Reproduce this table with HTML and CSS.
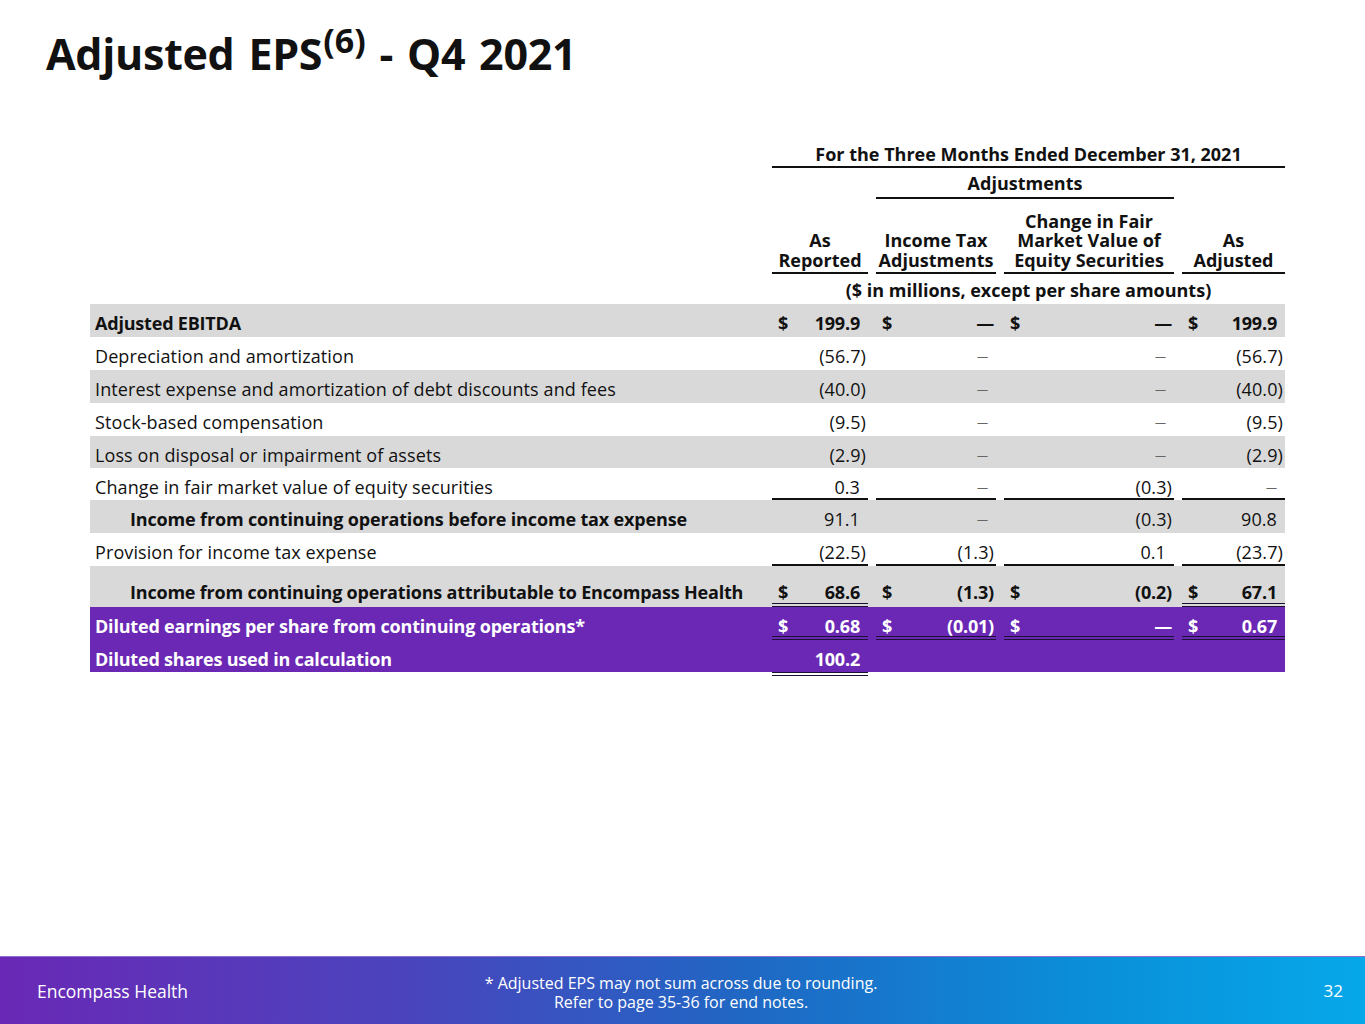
FILE: index.html
```html
<!DOCTYPE html>
<html lang="en">
<head>
<meta charset="utf-8">
<title>Adjusted EPS - Q4 2021</title>
<link rel="stylesheet" href="styles.css">
</head>
<body>
<div class="page">
  <main class="main">
    <h1 class="title">Adjusted EPS<sup>(6)</sup> - Q4 2021</h1>
    <div class="eps">
      <div class="row h1">
        <div class="th span-all ul">For the Three Months Ended December 31, 2021</div>
      </div>
      <div class="row h2">
        <div class="th span-adj ul">Adjustments</div>
      </div>
      <div class="row h3">
        <div class="th c1 ul"><div>As</div><div>Reported</div></div>
        <div class="th c2 ul"><div>Income Tax</div><div>Adjustments</div></div>
        <div class="th c3 ul"><div>Change in Fair</div><div>Market Value of</div><div>Equity Securities</div></div>
        <div class="th c4 ul"><div>As</div><div>Adjusted</div></div>
      </div>
      <div class="row h4">
        <div class="th span-all">($ in millions, except per share amounts)</div>
      </div>

      <div class="row gray bold">
        <div class="label">Adjusted EBITDA</div>
        <div class="v c1"><span>$</span><span class="p">199.9</span></div>
        <div class="v c2"><span>$</span><span class="bd">—</span></div>
        <div class="v c3"><span>$</span><span class="bd">—</span></div>
        <div class="v c4"><span>$</span><span class="p">199.9</span></div>
      </div>
      <div class="row">
        <div class="label">Depreciation and amortization</div>
        <div class="v c1"><span>(56.7)</span></div>
        <div class="v c2"><span class="d">—</span></div>
        <div class="v c3"><span class="d">—</span></div>
        <div class="v c4"><span>(56.7)</span></div>
      </div>
      <div class="row gray">
        <div class="label">Interest expense and amortization of debt discounts and fees</div>
        <div class="v c1"><span>(40.0)</span></div>
        <div class="v c2"><span class="d">—</span></div>
        <div class="v c3"><span class="d">—</span></div>
        <div class="v c4"><span>(40.0)</span></div>
      </div>
      <div class="row">
        <div class="label">Stock-based compensation</div>
        <div class="v c1"><span>(9.5)</span></div>
        <div class="v c2"><span class="d">—</span></div>
        <div class="v c3"><span class="d">—</span></div>
        <div class="v c4"><span>(9.5)</span></div>
      </div>
      <div class="row gray r32">
        <div class="label">Loss on disposal or impairment of assets</div>
        <div class="v c1"><span>(2.9)</span></div>
        <div class="v c2"><span class="d">—</span></div>
        <div class="v c3"><span class="d">—</span></div>
        <div class="v c4"><span>(2.9)</span></div>
      </div>
      <div class="row r32">
        <div class="label">Change in fair market value of equity securities</div>
        <div class="v c1 ul"><span class="p">0.3</span></div>
        <div class="v c2 ul"><span class="d">—</span></div>
        <div class="v c3 ul"><span>(0.3)</span></div>
        <div class="v c4 ul"><span class="d">—</span></div>
      </div>
      <div class="row gray">
        <div class="label b indent">Income from continuing operations before income tax expense</div>
        <div class="v c1"><span class="p">91.1</span></div>
        <div class="v c2"><span class="d">—</span></div>
        <div class="v c3"><span>(0.3)</span></div>
        <div class="v c4"><span class="p">90.8</span></div>
      </div>
      <div class="row">
        <div class="label">Provision for income tax expense</div>
        <div class="v c1 ul"><span>(22.5)</span></div>
        <div class="v c2 ul"><span>(1.3)</span></div>
        <div class="v c3 ul"><span class="p">0.1</span></div>
        <div class="v c4 ul"><span>(23.7)</span></div>
      </div>
      <div class="row gray bold tall">
        <div class="label indent">Income from continuing operations attributable to Encompass Health</div>
        <div class="v c1 dbl"><span>$</span><span class="p">68.6</span></div>
        <div class="v c2"><span>$</span><span>(1.3)</span></div>
        <div class="v c3"><span>$</span><span>(0.2)</span></div>
        <div class="v c4 dbl"><span>$</span><span class="p">67.1</span></div>
      </div>
      <div class="row purple bold">
        <div class="label">Diluted earnings per share from continuing operations*</div>
        <div class="v c1 dbl"><span>$</span><span class="p">0.68</span></div>
        <div class="v c2 dbl"><span>$</span><span>(0.01)</span></div>
        <div class="v c3 dbl"><span>$</span><span class="bd">—</span></div>
        <div class="v c4 dbl"><span>$</span><span class="p">0.67</span></div>
      </div>
      <div class="row purple bold last">
        <div class="label">Diluted shares used in calculation</div>
        <div class="v c1 dbl"><span class="p">100.2</span></div>
        <div class="v c2"></div>
        <div class="v c3"></div>
        <div class="v c4"></div>
      </div>
    </div>
  </main>
  <footer class="footer">
    <div class="brand">Encompass Health</div>
    <div class="note">* Adjusted EPS may not sum across due to rounding.<br>Refer to page 35-36 for end notes.</div>
    <div class="pageno">32</div>
  </footer>
</div>
</body>
</html>
```

FILE: styles.css
```css
html, body {
  margin: 0;
  padding: 0;
}
body {
  font-family: "Open Sans", "Noto Sans", sans-serif;
  color: #111;
  background: #fff;
}
.page {
  width: 1365px;
  height: 1024px;
  display: flex;
  flex-direction: column;
  overflow: hidden;
}
.main {
  flex: 1;
}
.title {
  margin: 26px 0 0 46px;
  font-size: 43px;
  line-height: 56px;
  font-weight: bold;
  letter-spacing: -0.3px;
  word-spacing: 3px;
}
.title sup {
  font-size: 34px;
  line-height: 0;
  vertical-align: 17px;
  margin-left: 1px;
  letter-spacing: 0;
}

/* table */
.eps {
  margin: 61px 0 0 90px;
  width: 1195px;
  font-size: 18px;
  letter-spacing: 0.1px;
}
.row {
  display: grid;
  grid-template-columns: 682px 96px 8px 120px 8px 170px 8px 103px;
  height: 33px;
}
.row > div {
  box-sizing: border-box;
  min-width: 0;
}
.c1 { grid-column: 2; }
.c2 { grid-column: 4; }
.c3 { grid-column: 6; }
.c4 { grid-column: 8; }
.span-all { grid-column: 2 / 9; }
.span-adj { grid-column: 4 / 7; }

.th {
  font-weight: bold;
  text-align: center;
  line-height: 19.5px;
  white-space: nowrap;
  letter-spacing: 0;
}
.th.ul { border-bottom: 2px solid #111; }
.h1 { height: 25px; }
.h1 .th { padding-top: 2px; }
.h2 { height: 31px; }
.h2 .th { padding-top: 6px; }
.h3 { height: 75px; }
.h3 .th {
  display: flex;
  flex-direction: column;
  justify-content: flex-end;
  padding-bottom: 2px;
}
.h3 .th > div { height: 19.5px; }
.h4 { height: 30px; }
.h4 .th { padding-top: 7px; }

.label {
  grid-column: 1;
  padding: 9px 0 0 5px;
  line-height: 20px;
  white-space: nowrap;
}
.label.indent { padding-left: 40px; }
.label.b { font-weight: bold; letter-spacing: -0.15px; }

.v {
  display: flex;
  justify-content: flex-end;
  padding: 9px 2px 0 6px;
  line-height: 20px;
}
.v span:first-child:not(:last-child) { margin-right: auto; }
.v .p { padding-right: 6px; }
.v .d {
  font-size: 11px;
  color: #666;
  padding-right: 6px;
  font-weight: normal;
}
.v .bd { padding-right: 0; }
.row > .ul { border-bottom: 2px solid #111; }
.r32 { height: 32px; }

.gray { background: #d9d9d9; }
.bold { font-weight: bold; letter-spacing: -0.2px; }
.tall { height: 41px; }
.tall > div { padding-top: 16px; }
.row > .dbl { border-bottom: 4px double #1d1236; }
.purple {
  background: #6a28b4;
  color: #fff;
}
.purple .d { color: #fff; }
.last {
  height: 36px;
  background: linear-gradient(#6a28b4, #6a28b4) top / 100% 32px no-repeat;
}

/* footer */
.footer {
  height: 68px;
  flex: none;
  background: linear-gradient(90deg, #6a29b6 0%, #4a44bd 30%, #1f68c4 55%, #0a8fd8 80%, #06a8ea 100%);
  border-top: 1px solid #8d6fd2;
  box-sizing: border-box;
  display: flex;
  align-items: center;
  color: #fff;
}
.brand {
  font-size: 17.5px;
  margin-left: 37px;
  width: 440px;
}
.note {
  flex: 1;
  text-align: center;
  font-size: 16px;
  line-height: 19px;
  margin: 5px 0 0 -30px;
}
.pageno {
  font-size: 17px;
  width: 450px;
  text-align: right;
  padding-right: 22px;
  box-sizing: border-box;
}
```
